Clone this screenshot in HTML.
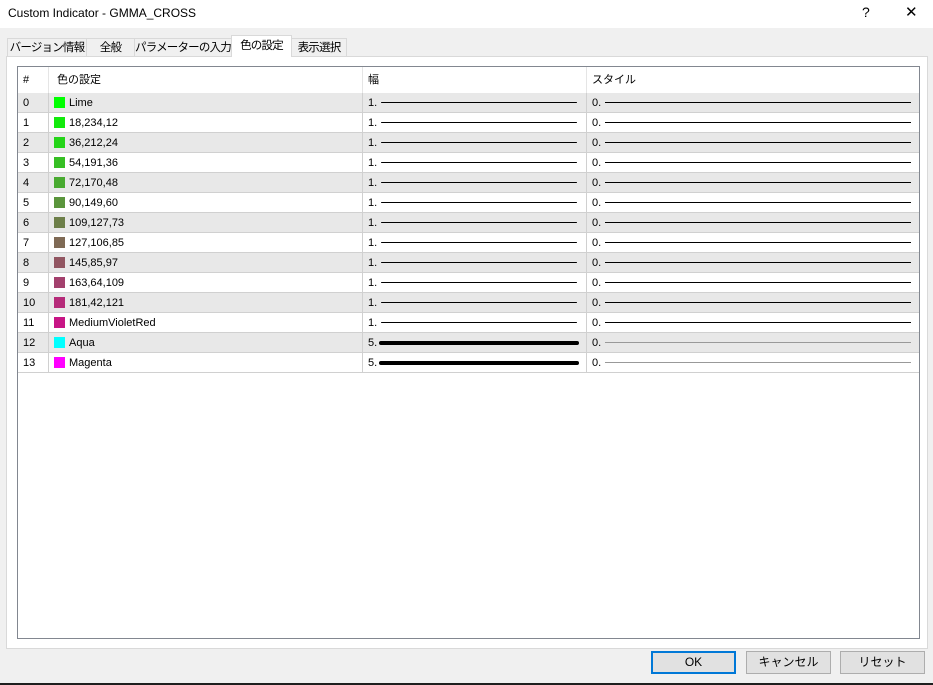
<!DOCTYPE html>
<html><head><meta charset="utf-8"><style>
body{margin:0;width:933px;height:685px;background:#f0f0f0;font-family:"Liberation Sans","Noto Sans CJK JP",sans-serif;font-size:12px;color:#000;position:relative;overflow:hidden}
.t{position:absolute;left:0;top:0;width:933px;height:28px;background:#fff}
.t span{position:absolute;left:8px;top:6px;font-size:12px}
.tab{position:absolute;top:38px;height:18px;border:1px solid #d9d9d9;border-bottom:none;background:#f0f0f0;font-size:11.5px;line-height:18px;text-align:center;box-sizing:border-box;white-space:nowrap;letter-spacing:-0.8px;overflow:hidden}
.panel{position:absolute;left:6px;top:56px;width:922px;height:593px;background:#fff;border:1px solid #d9d9d9;box-sizing:border-box}
.list{position:absolute;left:17px;top:66px;width:903px;height:573px;border:1px solid #828790;box-sizing:border-box;background:#fff}
.row{position:absolute;left:0;width:901px;height:20px;border-bottom:1px solid #d0d0d0;box-sizing:border-box;font-size:11px}
.row div{position:absolute;top:0;height:19px;line-height:20px;border-right:1px solid #d0d0d0;box-sizing:border-box}
.c0{left:0;width:31px;padding-left:5px}.c1{left:31px;width:314px;padding-left:5px}.c2{left:345px;width:224px;padding-left:5px}.c3{left:569px;width:332px;padding-left:5px;border-right:none!important}
.sw{display:inline-block;width:11px;height:11px;vertical-align:-2px;margin-right:4px}
.ln{position:absolute;background:#000}
.btn{position:absolute;top:651px;width:85px;height:23px;background:#e1e1e1;border:1px solid #adadad;box-sizing:border-box;text-align:center;line-height:21px;font-size:12px}
</style></head><body>
<div class="t"><span>Custom Indicator - GMMA_CROSS</span><span style="left:862px;top:4px;font-size:14px">?</span><span style="left:905px;top:3px;font-size:15px">✕</span></div>
<div class="panel"></div>
<div class="tab" style="left:7px;width:80px">バージョン情報</div>
<div class="tab" style="left:86px;width:49px">全般</div>
<div class="tab" style="left:134px;width:98px">パラメーターの入力</div>
<div class="tab" style="left:231px;top:35px;height:22px;width:61px;background:#fff;line-height:20px;z-index:2">色の設定</div>
<div class="tab" style="left:291px;width:56px">表示選択</div>
<div class="list">
<div class="row" style="top:0;height:27px;border-bottom:1px solid #e5e5e5"><div class="c0" style="height:26px;line-height:26px;border-color:#e5e5e5">#</div><div class="c1" style="height:26px;line-height:26px;padding-left:8px;border-color:#e5e5e5">色の設定</div><div class="c2" style="height:26px;line-height:26px;border-color:#e5e5e5">幅</div><div class="c3" style="height:26px;line-height:26px">スタイル</div></div>
<div id="rows"></div>
</div>
<script>
var d=[["Lime","0,255,0"],["18,234,12"],["36,212,24"],["54,191,36"],["72,170,48"],["90,149,60"],["109,127,73"],["127,106,85"],["145,85,97"],["163,64,109"],["181,42,121"],["MediumVioletRed","199,21,133"],["Aqua","0,255,255"],["Magenta","255,0,255"]];
var h="";
d.forEach(function(r,i){var c=r[1]||r[0];var top=26+i*20;var bg=i%2==0?"#e8e8e8":"#fff";var w=i>=12;
h+='<div class="row" style="top:'+top+'px;background:'+bg+'"><div class="c0">'+i+'</div><div class="c1"><span class="sw" style="background:rgb('+c+')"></span>'+r[0]+'</div><div class="c2">'+(w?'5.':'1.')+'<span class="ln" style="left:'+(w?16:18)+'px;top:'+(w?8:9)+'px;width:'+(w?200:196)+'px;height:'+(w?4:1)+'px;border-radius:2px"></span></div><div class="c3">0.<span class="ln" style="left:18px;top:9px;width:306px;height:1px;background:'+(w?'#999':'#000')+'"></span></div></div>';});
document.getElementById("rows").innerHTML=h;
</script>
<div class="btn" style="left:651px;border:2px solid #0078d7;line-height:19px">OK</div>
<div class="btn" style="left:746px">キャンセル</div>
<div class="btn" style="left:840px">リセット</div>
<div style="position:absolute;left:0;top:683px;width:933px;height:2px;background:#1e1e1e"></div>
</body></html>
